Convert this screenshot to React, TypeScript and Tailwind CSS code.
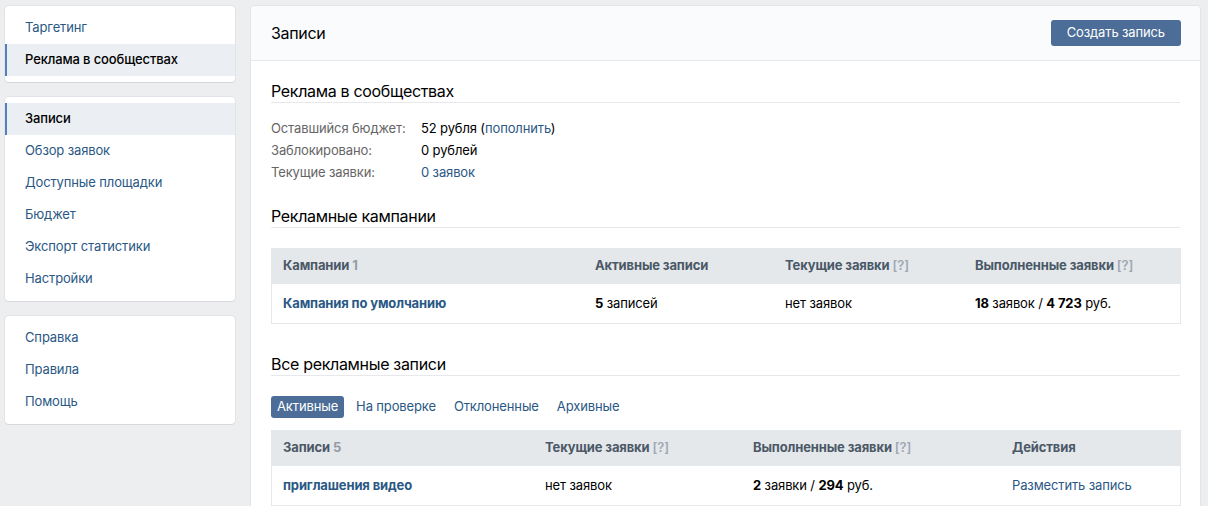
import React from 'react';

const font = { fontFamily: 'Inter, "Noto Sans", sans-serif' };

const SideItem: React.FC<{ label: string; active?: boolean }> = ({ label, active }) => (
  <div
    className={
      active
        ? 'h-8 flex items-center pl-[18px] border-l-2 border-[#5181b8] bg-[#ebeef2] text-black font-medium'
        : 'h-8 flex items-center pl-5 text-[#2a5885]'
    }
  >
    {label}
  </div>
);

const SideCard: React.FC<{ children: React.ReactNode }> = ({ children }) => (
  <div className="bg-white rounded-[4px] py-1.5 shadow-[0_1px_0_0_#d7d8db,0_0_0_1px_#e3e4e8]">{children}</div>
);

const Heading: React.FC<{ children: React.ReactNode }> = ({ children }) => (
  <div className="text-base leading-5 text-black pb-px border-b border-[#e7e8ec] tracking-[-0.02em]">{children}</div>
);

const Q = () => <span className="text-[#a0a8b3] font-semibold">[?]</span>;
const B: React.FC<{ children: React.ReactNode }> = ({ children }) => <span className="font-bold">{children}</span>;

export default function App() {
  return (
    <div style={font} className="min-h-[506px] bg-[#edeef0] text-[13px] tracking-[-0.01em] pl-[5px] pt-1.5 flex gap-4 overflow-hidden">
      {/* sidebar */}
      <div className="w-[230px] shrink-0 flex flex-col gap-[15px]">
        <SideCard>
          <SideItem label="Таргетинг" />
          <SideItem label="Реклама в сообществах" active />
        </SideCard>
        <SideCard>
          <SideItem label="Записи" active />
          <SideItem label="Обзор заявок" />
          <SideItem label="Доступные площадки" />
          <SideItem label="Бюджет" />
          <SideItem label="Экспорт статистики" />
          <SideItem label="Настройки" />
        </SideCard>
        <SideCard>
          <SideItem label="Справка" />
          <SideItem label="Правила" />
          <SideItem label="Помощь" />
        </SideCard>
      </div>

      {/* main */}
      <div className="w-[949px] shrink-0 bg-white rounded-t-[4px] shadow-[0_1px_0_0_#d7d8db,0_0_0_1px_#e3e4e8]">
        <div className="h-[55px] bg-[#fafbfc] border-b border-[#e7e8ec] rounded-t-[4px] flex items-center justify-between pl-5 pr-[19px]">
          <div className="text-base text-black tracking-[-0.02em]">Записи</div>
          <button className="h-[26px] px-4 rounded-[3px] bg-[#4b6d97] text-white text-[13px]">Создать запись</button>
        </div>

        <div className="px-5 pt-5">
          <Heading>Реклама в сообществах</Heading>
          <div className="mt-[14px] leading-[22px]">
            <div className="flex">
              <div className="w-[150px] text-[#656565]">Оставшийся бюджет:</div>
              <div className="text-black">
                52 рубля (<span className="text-[#2a5885]">пополнить</span>)
              </div>
            </div>
            <div className="flex">
              <div className="w-[150px] text-[#656565]">Заблокировано:</div>
              <div className="text-black">0 рублей</div>
            </div>
            <div className="flex">
              <div className="w-[150px] text-[#656565]">Текущие заявки:</div>
              <div className="text-[#2a5885]">0 заявок</div>
            </div>
          </div>

          <div className="mt-[23px]">
            <Heading>Рекламные кампании</Heading>
          </div>
          <div className="mt-5 w-[910px]">
            <div className="h-9 bg-[#e4e8eb] flex items-center font-bold text-[#4b5867]">
              <div className="w-[312px] px-3">
                Кампании <span className="text-[#939ca8]">1</span>
              </div>
              <div className="w-[190px] px-3">Активные записи</div>
              <div className="w-[190px] px-3">
                Текущие заявки <Q />
              </div>
              <div className="flex-1 px-3">
                Выполненные заявки <Q />
              </div>
            </div>
            <div className="h-10 flex items-center border border-t-0 border-[#e7e8ec] text-black">
              <div className="w-[311px] pl-[11px] pr-3 font-bold text-[#2a5885]">Кампания по умолчанию</div>
              <div className="w-[190px] px-3">
                <B>5</B> записей
              </div>
              <div className="w-[190px] px-3">нет заявок</div>
              <div className="flex-1 px-3">
                <B>18</B> заявок / <B>4 723</B> руб.
              </div>
            </div>
          </div>

          <div className="mt-[30px]">
            <Heading>Все рекламные записи</Heading>
          </div>
          <div className="mt-5 flex gap-1.5 h-[22px] items-center">
            <div className="h-[22px] px-1.5 flex items-center rounded-[3px] bg-[#4b6d97] text-white">Активные</div>
            <div className="px-1.5 text-[#2a5885]">На проверке</div>
            <div className="px-1.5 text-[#2a5885]">Отклоненные</div>
            <div className="px-1.5 text-[#2a5885]">Архивные</div>
          </div>
          <div className="mt-3 w-[910px]">
            <div className="h-9 bg-[#e4e8eb] flex items-center font-bold text-[#4b5867]">
              <div className="w-[262px] px-3">
                Записи <span className="text-[#939ca8]">5</span>
              </div>
              <div className="w-[208px] px-3">
                Текущие заявки <Q />
              </div>
              <div className="w-[259px] px-3">
                Выполненные заявки <Q />
              </div>
              <div className="flex-1 px-3">Действия</div>
            </div>
            <div className="h-10 flex items-center border border-t-0 border-[#e7e8ec] text-black">
              <div className="w-[261px] pl-[11px] pr-3 font-bold text-[#2a5885]">приглашения видео</div>
              <div className="w-[208px] px-3">нет заявок</div>
              <div className="w-[259px] px-3">
                <B>2</B> заявки / <B>294</B> руб.
              </div>
              <div className="flex-1 px-3 text-[#2a5885]">Разместить запись</div>
            </div>
          </div>
        </div>
      </div>
    </div>
  );
}
